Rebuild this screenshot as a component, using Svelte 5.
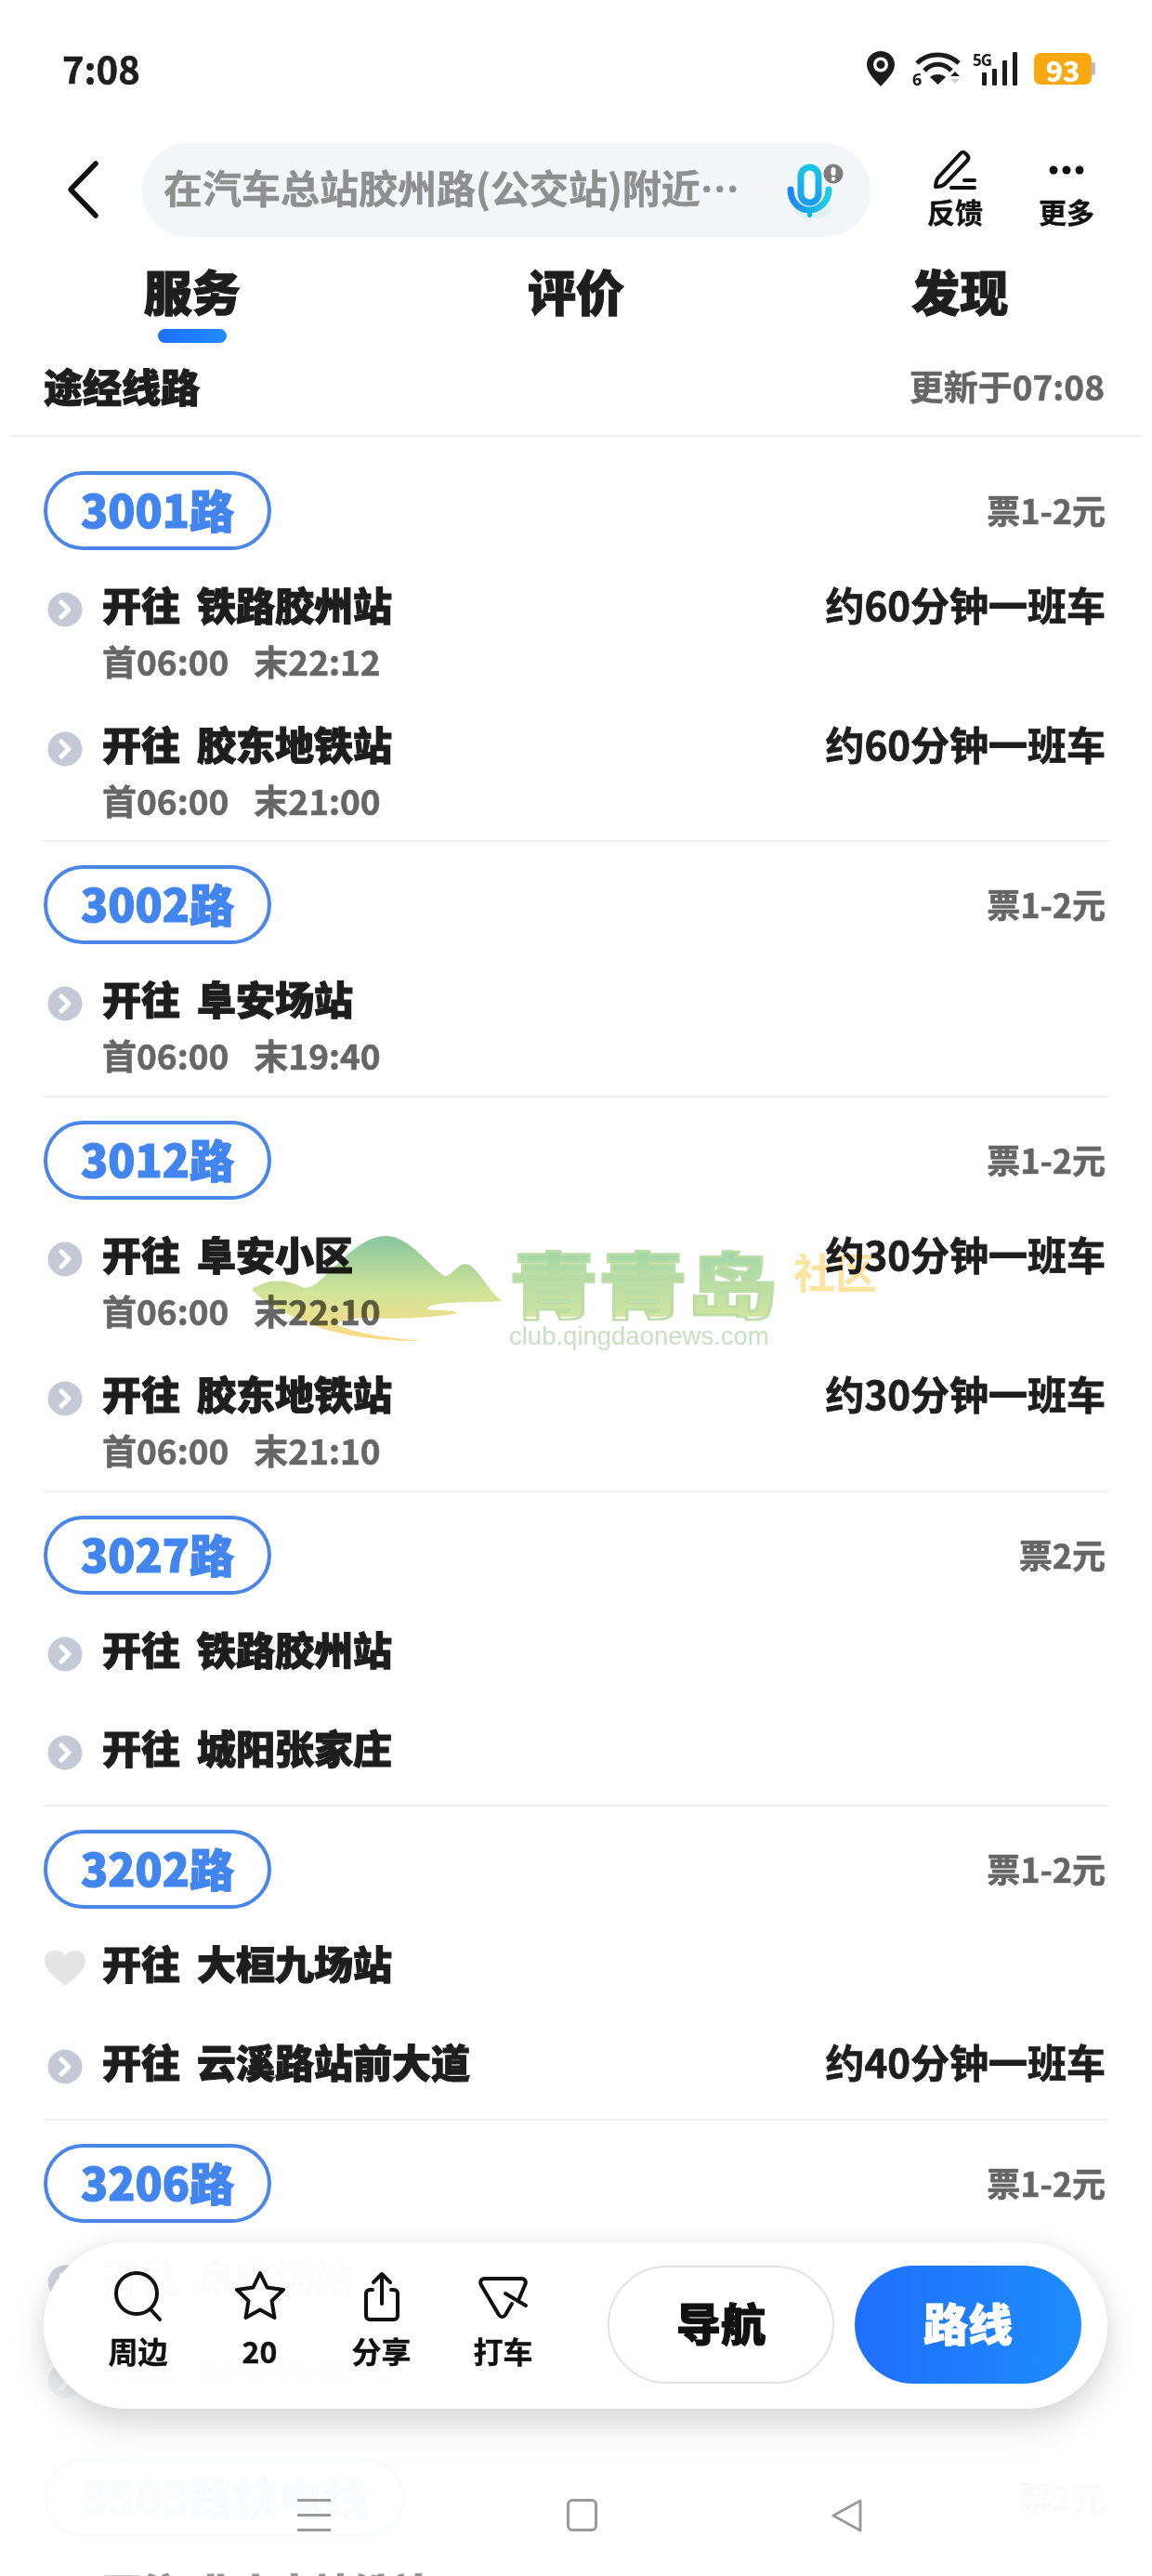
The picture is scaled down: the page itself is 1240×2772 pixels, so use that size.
<script lang="ts">
	interface Line {
		to: string;
		first?: string;
		last?: string;
		freq?: string;
		icon?: string;
	}
	interface Route {
		name: string;
		price: string;
		lines: Line[];
	}

	const tabs = ['服务', '评价', '发现'];

	const routes: Route[] = [
		{
			name: '3001路',
			price: '票1-2元',
			lines: [
				{ to: '铁路胶州站', first: '06:00', last: '22:12', freq: '约60分钟一班车' },
				{ to: '胶东地铁站', first: '06:00', last: '21:00', freq: '约60分钟一班车' }
			]
		},
		{
			name: '3002路',
			price: '票1-2元',
			lines: [{ to: '阜安场站', first: '06:00', last: '19:40' }]
		},
		{
			name: '3012路',
			price: '票1-2元',
			lines: [
				{ to: '阜安小区', first: '06:00', last: '22:10', freq: '约30分钟一班车' },
				{ to: '胶东地铁站', first: '06:00', last: '21:10', freq: '约30分钟一班车' }
			]
		},
		{
			name: '3027路',
			price: '票2元',
			lines: [{ to: '铁路胶州站' }, { to: '城阳张家庄' }]
		},
		{
			name: '3202路',
			price: '票1-2元',
			lines: [
				{ to: '大桓九场站', icon: 'heart' },
				{ to: '云溪路站前大道', freq: '约40分钟一班车' }
			]
		},
		{
			name: '3206路',
			price: '票1-2元',
			lines: [{ to: '阜安场站' }, { to: '胶东地铁站' }]
		},
		{
			name: '3503路快电线',
			price: '票2元',
			lines: [{ to: '北小屯地铁站' }]
		}
	];
</script>

<div class="page">
	<div class="status">
		<span class="time">7:08</span>
		<div class="status-icons">
			<svg class="pin" viewBox="0 0 30 38" width="30" height="38">
				<path d="M15 0C6.5 0 0 6.5 0 14.5 0 24 10 32 15 38c5-6 15-14 15-23.500C30 6.500 23.500 0 15 0z" fill="#1c1c1c" />
				<circle cx="15" cy="14.500" r="8" fill="#fff" />
				<circle cx="15" cy="14.500" r="4.500" fill="#1c1c1c" />
			</svg>
			<svg class="wifi" viewBox="0 0 54 38" width="54" height="38">
				<g fill="none" stroke="#1c1c1c" stroke-width="5">
					<path d="M5 13C17 1 37 1 50 13" />
					<path d="M13 21C21 12 34 12 42 21" />
				</g>
				<path d="M19 28c4-4 13-4 17 0l-8.500 8z" fill="#1c1c1c" />
				<path d="M41 27l5-5 5 5z" fill="#1c1c1c" />
				<path d="M41 30l5 5 5-5z" fill="#cfcfcf" />
				<text x="0" y="37" class="wifi-six">6</text>
			</svg>
			<svg class="signal" viewBox="0 0 50 38" width="50" height="38">
				<text x="0" y="16" class="five-g">5G</text>
				<rect x="10" y="23" width="5" height="14" rx="1" fill="#1c1c1c" />
				<rect x="21" y="19" width="5" height="18" rx="1" fill="#1c1c1c" />
				<rect x="32" y="10" width="5" height="27" rx="1" fill="#1c1c1c" />
				<rect x="43" y="1" width="5" height="36" rx="1" fill="#1c1c1c" />
			</svg>
			<div class="battery"><span>93</span></div>
		</div>
	</div>

	<div class="toolbar">
		<svg class="back" viewBox="0 0 40 64" width="40" height="64">
			<path d="M33 4L6 32l27 28" fill="none" stroke="#111" stroke-width="5.500" stroke-linecap="round" stroke-linejoin="round" />
		</svg>
		<div class="search">
			<span class="query">在汽车总站胶州路(公交站)附近…</span>
			<svg class="mic" viewBox="0 0 64 64" width="64" height="64">
				<defs>
					<linearGradient id="mic-body" x1="0" y1="0" x2="0" y2="1">
						<stop offset="0" stop-color="#19c6e6" />
						<stop offset="1" stop-color="#1a9cf0" />
					</linearGradient>
					<linearGradient id="mic-cup" x1="0" y1="0" x2="1" y2="0">
						<stop offset="0" stop-color="#1f86f5" />
						<stop offset="1" stop-color="#1bd0e4" />
					</linearGradient>
				</defs>
				<ellipse cx="34" cy="50" rx="20" ry="11" fill="#c9f3ef" opacity="0.5" />
				<rect x="21" y="5" width="19" height="38" rx="9.500" fill="#fff" stroke="url(#mic-body)" stroke-width="7" />
				<path d="M10 29c0 13 9 22 20 22s21-9 21-22" fill="none" stroke="url(#mic-cup)" stroke-width="7" stroke-linecap="round" />
				<rect x="28" y="50" width="5" height="9" rx="2.500" fill="#1ab0ee" />
			</svg>
			<svg class="mic-badge" viewBox="0 0 22 22" width="22" height="22">
				<circle cx="11" cy="11" r="10.500" fill="#7d7d7d" />
				<rect x="8.500" y="4" width="5" height="9" rx="2.500" fill="#fff" />
				<circle cx="11" cy="16.500" r="2.300" fill="#fff" />
			</svg>
		</div>
		<div class="tool">
			<svg viewBox="0 0 48 44" width="48" height="44">
				<path d="M30 4L6 30c-2 2-3 8-3 10 3 0 8-1 10-3L37 12c2-2 2-4 0-6l-2-2c-2-2-3-2-5 0z" fill="none" stroke="#111" stroke-width="4" stroke-linejoin="round" />
				<path d="M20 41h25M34 33h11" stroke="#111" stroke-width="4" stroke-linecap="round" />
			</svg>
			<span>反馈</span>
		</div>
		<div class="tool">
			<svg viewBox="0 0 48 44" width="48" height="44">
				<circle cx="10" cy="22" r="4.500" fill="#111" />
				<circle cx="24" cy="22" r="4.500" fill="#111" />
				<circle cx="38" cy="22" r="4.500" fill="#111" />
			</svg>
			<span>更多</span>
		</div>
	</div>

	<div class="tabs">
		{#each tabs as tab, i}
			<div class="tab" class:active={i === 0}>{tab}</div>
		{/each}
	</div>

	<div class="section-head">
		<h2>途经线路</h2>
		<span>更新于07:08</span>
	</div>

	<div class="routes">
		{#each routes as route}
			<section class="route">
				<div class="route-head">
					<span class="pill"><span>{route.name}</span></span>
					<span class="price">{route.price}</span>
				</div>
				{#each route.lines as line}
					<div class="line" class:timed={line.first}>
						<div class="line-main">
							{#if line.icon === 'heart'}
								<svg class="dot" viewBox="0 0 44 38" width="44" height="38">
									<path d="M22 38C10 28 0 21 0 11 0 4 5 0 11 0c5 0 9 2 11 6 2-4 6-6 11-6 6 0 11 4 11 11 0 10-10 17-22 27z" fill="#e4e4e4" />
								</svg>
							{:else}
								<svg class="dot" viewBox="0 0 44 38" width="44" height="38">
									<circle cx="22" cy="19" r="18.500" fill="#c3c9d5" />
									<path d="M18 11l8 8-8 8" fill="none" stroke="#fff" stroke-width="5" stroke-linecap="round" stroke-linejoin="round" />
								</svg>
							{/if}
							<span class="dest"><b>开往</b><b>{line.to}</b></span>
							{#if line.freq}
								<span class="freq">{line.freq}</span>
							{/if}
						</div>
						{#if line.first}
							<div class="hours">
								<span>首{line.first}</span>
								<span>末{line.last}</span>
							</div>
						{/if}
					</div>
				{/each}
			</section>
		{/each}
	</div>

	<div class="watermark">
		<svg viewBox="0 0 272 114" width="272" height="114">
			<defs>
				<linearGradient id="hill" x1="0" y1="0" x2="0" y2="1">
					<stop offset="0" stop-color="#86c5a0" />
					<stop offset="0.55" stop-color="#d3e498" />
					<stop offset="1" stop-color="#fdd983" />
				</linearGradient>
			</defs>
			<path d="M1 57C20 45 40 47 55 55 65 58 72 50 85 38 105 18 125 0 145 0 170 0 190 30 208 43 215 45 222 30 231 30 245 32 255 60 271 70 240 72 195 70 190 78 195 82 215 78 223 83 200 88 150 90 118 88 100 90 95 92 93 95 110 105 150 110 185 113 130 113 80 105 55 90 40 85 10 70 1 57Z" fill="url(#hill)" />
		</svg>
		<div class="wm-text">
			<div class="wm-name">青青岛</div>
			<div class="wm-url">club.qingdaonews.com</div>
		</div>
		<div class="wm-tag">社区</div>
	</div>

	<div class="fade"></div>

	<div class="dock">
		<div class="dock-items">
			<div class="dock-item">
				<svg viewBox="0 0 60 60" width="60" height="60">
					<circle cx="28" cy="27" r="22" fill="none" stroke="#111" stroke-width="4" />
					<path d="M43 44l10 11" stroke="#111" stroke-width="4" stroke-linecap="round" />
				</svg>
				<span>周边</span>
			</div>
			<div class="dock-item">
				<svg viewBox="0 0 60 60" width="60" height="60">
					<path d="M30 5l7.500 15.500 17.500 2.500-12.500 12 3 18L30 44.500 14.500 53l3-18L5 23l17.500-2.500z" fill="none" stroke="#111" stroke-width="4" stroke-linejoin="round" />
				</svg>
				<span>20</span>
			</div>
			<div class="dock-item">
				<svg viewBox="0 0 60 60" width="60" height="60">
					<path d="M20 23h-3a4 4 0 0 0-4 4v24a4 4 0 0 0 4 4h26a4 4 0 0 0 4-4V27a4 4 0 0 0-4-4h-3" fill="none" stroke="#111" stroke-width="4" stroke-linecap="round" />
					<path d="M30 38V7M21 15l9-9 9 9" fill="none" stroke="#111" stroke-width="4" stroke-linecap="round" stroke-linejoin="round" />
				</svg>
				<span>分享</span>
			</div>
			<div class="dock-item">
				<svg viewBox="0 0 60 60" width="60" height="60">
					<path d="M47 32l6-14c2-4 0-7-4-7H10c-4 0-6 3-4 7l19 32c2 3 5 3 7 0l7-12" fill="none" stroke="#111" stroke-width="4" stroke-linecap="round" stroke-linejoin="round" />
					<path d="M32 27l22 13" stroke="#111" stroke-width="4" stroke-linecap="round" />
				</svg>
				<span>打车</span>
			</div>
		</div>
		<button class="nav-btn">导航</button>
		<button class="route-btn">路线</button>
	</div>

	<div class="sysnav">
		<div class="menu-icon"><i></i><i></i><i></i></div>
		<div class="home-icon"></div>
		<svg viewBox="0 0 36 36" width="36" height="36">
			<path d="M33 2L3 18l30 16z" fill="none" stroke="#9a9a9a" stroke-width="3" stroke-linejoin="round" transform="translate(2 0) scale(.97 1)" />
		</svg>
	</div>
</div>

<style>
	:global(body) {
		margin: 0;
		background: #fff;
	}

	.page {
		position: relative;
		width: 1240px;
		height: 2772px;
		overflow: hidden;
		background: #fff;
		color: #1e1e1e;
		font-family: 'Noto Sans CJK SC', 'Noto Sans', sans-serif;
	}

	svg {
		overflow: visible;
	}

	.status {
		height: 148px;
		padding: 0 65px 0 67px;
		display: flex;
		align-items: center;
		justify-content: space-between;
		box-sizing: border-box;
	}

	.time {
		font-size: 40px;
		font-weight: 700;
		-webkit-text-stroke: 0.6px;
		margin-bottom: 3px;
	}

	.status-icons {
		display: flex;
		align-items: center;
	}

	.wifi {
		margin-left: 19px;
	}

	.wifi-six {
		font: 700 18px 'Noto Sans', sans-serif;
		fill: #1c1c1c;
	}

	.signal {
		margin-left: 11px;
	}

	.five-g {
		font: 700 17px 'Noto Sans', sans-serif;
		letter-spacing: -1px;
		fill: #1c1c1c;
	}

	.battery {
		margin-left: 16px;
		width: 62px;
		height: 34px;
		border-radius: 7px;
		background: #f9a80f;
		display: flex;
		align-items: center;
		justify-content: center;
		color: #fff;
		font-size: 31px;
		font-weight: 700;
		line-height: 1;
		position: relative;
		-webkit-text-stroke: 0.5px;
	}

	.battery::after {
		content: '';
		position: absolute;
		right: -4px;
		top: 10px;
		width: 4px;
		height: 14px;
		background: #b9bcc4;
		border-radius: 0 3px 3px 0;
	}

	.toolbar {
		height: 112px;
		display: flex;
		align-items: center;
		padding-left: 70px;
		box-sizing: border-box;
	}

	.back {
		flex: none;
	}

	.search {
		position: relative;
		margin-left: 43px;
		width: 784px;
		height: 101px;
		border-radius: 50px;
		background: #f3f5f8;
		display: flex;
		align-items: center;
		padding-left: 23px;
		box-sizing: border-box;
	}

	.query {
		font-size: 42px;
		font-weight: 700;
		color: #8f8f8f;
		white-space: nowrap;
		margin-bottom: 7px;
		-webkit-text-stroke: 0.5px;
	}

	.mic {
		position: absolute;
		left: 688px;
		top: 21px;
	}

	.mic-badge {
		position: absolute;
		left: 733px;
		top: 22px;
	}

	.tool {
		width: 120px;
		display: flex;
		flex-direction: column;
		align-items: center;
		font-size: 30px;
		font-weight: 700;
		line-height: 40px;
		color: #111;
		-webkit-text-stroke: 0.4px;
	}

	.tool:nth-of-type(2) {
		margin-left: 31px;
	}

	.tool svg {
		margin-bottom: 2px;
	}

	.tabs {
		height: 112px;
		display: grid;
		grid-template-columns: repeat(3, 1fr);
		box-sizing: border-box;
	}

	.tab {
		position: relative;
		text-align: center;
		font-size: 52px;
		font-weight: 900;
		line-height: 106px;
		-webkit-text-stroke: 1.2px;
	}

	.tab.active::after {
		content: '';
		position: absolute;
		left: 50%;
		top: 94px;
		width: 74px;
		height: 15px;
		margin-left: -37px;
		border-radius: 8px;
		background: linear-gradient(90deg, #1f6ffb, #1e8cfb);
	}

	.section-head {
		height: 98px;
		margin: 0 10px;
		padding: 0 41px 11px 37px;
		display: flex;
		align-items: center;
		justify-content: space-between;
		box-sizing: border-box;
		border-bottom: 2px solid #f1f1f1;
	}

	.section-head h2 {
		margin: 0;
		font-size: 42px;
		font-weight: 900;
		-webkit-text-stroke: 1.2px;
	}

	.section-head span {
		font-size: 37px;
		font-weight: 700;
		color: #666;
		-webkit-text-stroke: 0.5px;
	}

	.routes {
		padding: 12px 47px 0;
	}

	.route {
		padding: 25px 0 6px;
		border-bottom: 2px solid #eeeeee;
	}

	.route:first-child {
		padding-bottom: 5px;
	}

	.route:last-child {
		border-bottom: none;
	}

	.route-head {
		display: flex;
		align-items: center;
		justify-content: space-between;
		height: 85px;
		margin-bottom: 7px;
	}

	.pill {
		min-width: 243px;
		height: 85px;
		padding: 0 36px;
		border: 4px solid #4a86e8;
		border-radius: 43px;
		box-sizing: border-box;
		display: flex;
		align-items: center;
		justify-content: center;
		font-size: 48px;
		font-weight: 900;
		color: #4285ee;
		line-height: 1;
		-webkit-text-stroke: 1.2px;
	}

	.pill span {
		margin-bottom: 6px;
	}

	.price {
		margin-right: 3px;
		margin-bottom: 3px;
		font-size: 36px;
		font-weight: 700;
		color: #666;
		-webkit-text-stroke: 0.6px;
	}

	.line {
		height: 106.500px;
	}

	.line.timed {
		height: 150px;
	}

	.line-main {
		height: 106px;
		display: flex;
		align-items: center;
	}

	.dot {
		flex: none;
		margin-left: 1px;
		margin-top: 7px;
	}

	.dest {
		margin-left: 18px;
		margin-bottom: 6px;
		display: flex;
		gap: 18px;
		font-size: 42px;
		white-space: nowrap;
		-webkit-text-stroke: 1.2px;
	}

	.dest b {
		font-weight: 900;
	}

	.freq {
		margin-left: auto;
		margin-right: 3px;
		margin-bottom: 6px;
		font-size: 42px;
		font-weight: 700;
		white-space: nowrap;
		-webkit-text-stroke: 0.8px;
	}

	.hours {
		margin-top: -16px;
		padding-left: 63px;
		display: flex;
		gap: 27px;
		font-size: 37px;
		font-weight: 700;
		line-height: 44px;
		color: #666;
		-webkit-text-stroke: 0.6px;
	}

	.watermark {
		position: absolute;
		left: 270px;
		top: 1330px;
		display: flex;
		align-items: flex-start;
		mix-blend-mode: multiply;
	}

	.wm-text {
		margin-left: 6px;
	}

	.wm-name {
		font-size: 96px;
		font-weight: 900;
		line-height: 92px;
		background: linear-gradient(180deg, #9fd6a8, #d0e49e);
		-webkit-background-clip: text;
		background-clip: text;
		color: transparent;
		-webkit-text-stroke: 3px #b9dda4;
		white-space: nowrap;
		transform: translateY(4px) scaleY(0.8);
	}

	.wm-url {
		font-family: 'Liberation Sans', sans-serif;
		font-size: 27.500px;
		line-height: 32px;
		color: #c9dfc2;
		white-space: nowrap;
	}

	.wm-tag {
		margin: 13px 0 0 18px;
		font-size: 45px;
		font-weight: 700;
		line-height: 50px;
		color: #fde3a0;
	}

	.fade {
		position: absolute;
		left: 0;
		right: 0;
		top: 2400px;
		bottom: 0;
		background: linear-gradient(180deg, rgba(255, 255, 255, 0), rgba(255, 255, 255, 0.5) 30%, rgba(255, 255, 255, 0.97) 55%, rgba(255, 255, 255, 0.97) 94%, rgba(255, 255, 255, 0.5));
	}

	.dock {
		position: absolute;
		left: 47px;
		top: 2413px;
		width: 1145px;
		height: 179px;
		padding-left: 36px;
		box-sizing: border-box;
		border-radius: 90px;
		background: rgba(255, 255, 255, 0.985);
		box-shadow: 0 18px 36px rgba(0, 0, 0, 0.15), 0 -4px 22px rgba(0, 0, 0, 0.05);
		display: flex;
		align-items: center;
	}

	.dock-items {
		display: grid;
		grid-template-columns: repeat(4, 131px);
		padding-bottom: 14px;
	}

	.dock-item {
		display: flex;
		flex-direction: column;
		align-items: center;
		font-size: 32px;
		font-weight: 700;
		line-height: 42px;
		color: #111;
		-webkit-text-stroke: 0.4px;
	}

	.dock-item svg {
		margin-bottom: 7px;
	}

	.dock button {
		width: 244px;
		height: 127px;
		margin-bottom: 2px;
		padding: 0 0 7px;
		border-radius: 64px;
		box-sizing: border-box;
		font: 900 48px 'Noto Sans CJK SC', sans-serif;
		-webkit-text-stroke: 1px;
	}

	.nav-btn {
		margin-left: 47px;
		background: #fff;
		border: 2px solid #e2e2e2;
		color: #111;
	}

	.route-btn {
		margin-left: 22px;
		border: none;
		color: #fff;
		background: linear-gradient(90deg, #1f6ffb, #1e8cfb);
	}

	.sysnav {
		position: absolute;
		left: 320px;
		top: 2689px;
		width: 608px;
		display: flex;
		align-items: flex-start;
		justify-content: space-between;
	}

	.menu-icon {
		width: 36px;
		height: 35px;
		display: flex;
		flex-direction: column;
		justify-content: space-between;
	}

	.menu-icon i {
		height: 3px;
		background: #9a9a9a;
	}

	.home-icon {
		width: 33px;
		height: 35px;
		margin-left: 4px;
		box-sizing: border-box;
		border: 3px solid #9a9a9a;
		border-radius: 6px;
	}
</style>
